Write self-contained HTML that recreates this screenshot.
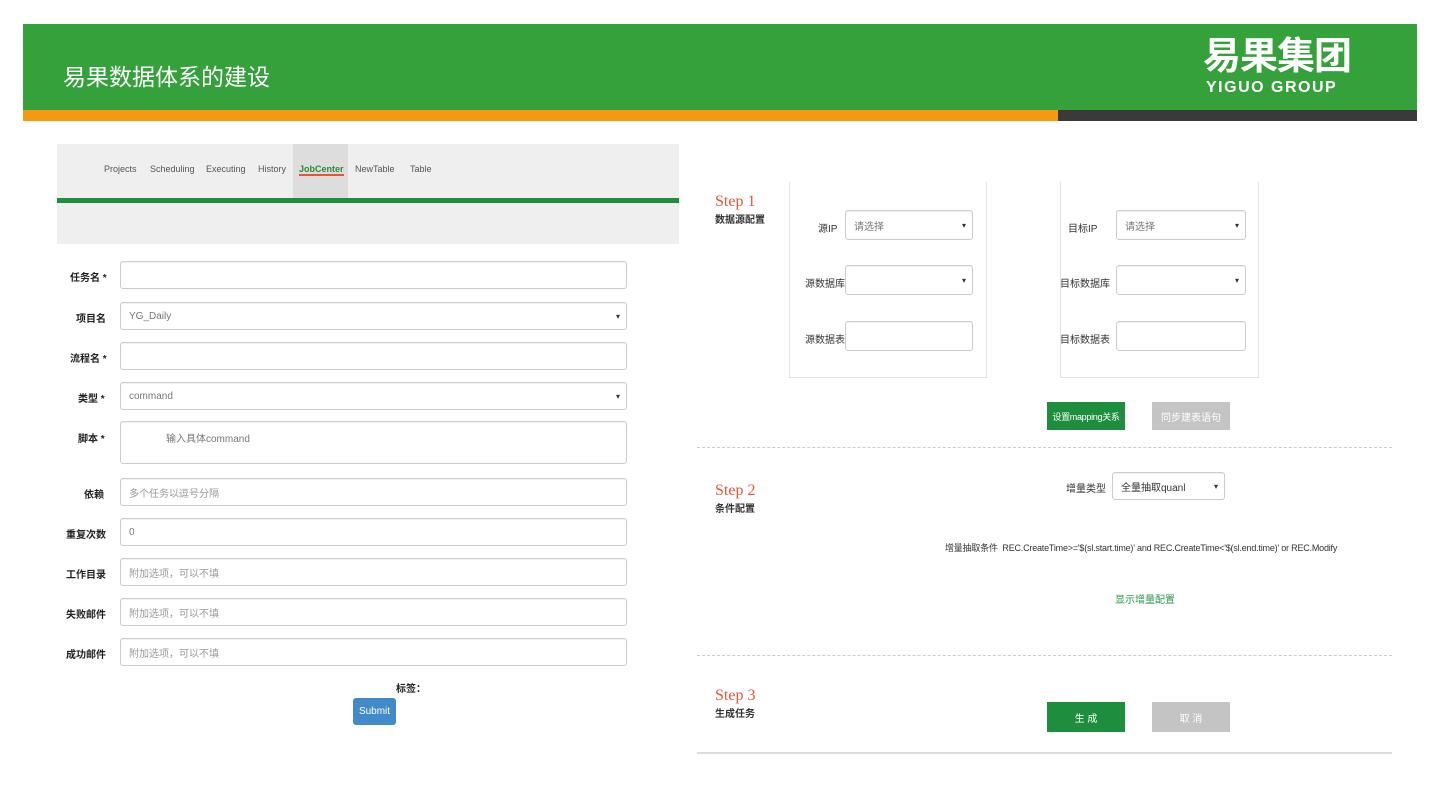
<!DOCTYPE html>
<html><head><meta charset="utf-8"><style>
*{margin:0;padding:0;box-sizing:border-box}
body{width:1440px;height:810px;background:#fff;position:relative;overflow:hidden;font-family:"Liberation Sans","Noto Sans CJK SC",sans-serif;color:#333}
.a{position:absolute}
.inp{position:absolute;border:1px solid #ccc;border-radius:3px;background:#fff;font-size:10px;color:#777;padding:0 8px;display:flex;align-items:center;box-shadow:inset 0 1px 1px rgba(0,0,0,.06)}
.sel::after{content:"▾";position:absolute;right:6px;font-size:8px;color:#333}
.lbl{position:absolute;font-size:10px;color:#222;font-weight:bold}
.rl{position:absolute;font-size:10px;color:#333}
.btn{position:absolute;color:#fff;font-size:10px;display:flex;align-items:center;justify-content:center;white-space:nowrap}
.step{position:absolute;font-size:10px}
.step b{color:#e8533a;font-weight:normal;font-size:16px;font-family:"Liberation Serif",serif}
.nav span{position:absolute;top:164px;font-size:9px;color:#555;white-space:nowrap}
</style></head><body>
<div class="a" style="left:23px;top:24px;width:1394px;height:86px;background:#34a13a"></div>
<div class="a" style="left:23px;top:110px;width:1035px;height:11px;background:#f39a12"></div>
<div class="a" style="left:1058px;top:110px;width:359px;height:11px;background:#3a3a3a"></div>
<div class="a" style="left:63px;top:58px;color:#fff;font-size:23px">易果数据体系的建设</div>
<div class="a" style="left:1203px;top:36px;color:#fff;font-size:38px;font-weight:bold;letter-spacing:-1px;line-height:42px">易果集团</div>
<div class="a" style="left:1206px;top:79px;color:#fff;font-size:16px;font-weight:bold;letter-spacing:1.5px">YIGUO GROUP</div>

<div class="a" style="left:57px;top:144px;width:622px;height:54px;background:#efefef"></div>
<div class="a" style="left:293px;top:144px;width:55px;height:54px;background:#ddd"></div>
<div class="nav">
<span style="left:104px">Projects</span>
<span style="left:150px">Scheduling</span>
<span style="left:206px">Executing</span>
<span style="left:258px">History</span>
<span style="left:299px;color:#2a8a3a;font-weight:bold;border-bottom:2px solid #e8533a">JobCenter</span>
<span style="left:355px">NewTable</span>
<span style="left:410px">Table</span>
</div>
<div class="a" style="left:57px;top:198px;width:622px;height:5px;background:#1e8e3e"></div>
<div class="a" style="left:57px;top:203px;width:622px;height:41px;background:#efefef"></div>

<div class="lbl" style="left:70px;top:269px">任务名 *</div><div class="inp" style="left:120px;top:261px;width:507px;height:28px"></div>
<div class="lbl" style="left:76px;top:310px">项目名</div><div class="inp sel" style="left:120px;top:302px;width:507px;height:28px">YG_Daily</div>
<div class="lbl" style="left:70px;top:350px">流程名 *</div><div class="inp" style="left:120px;top:342px;width:507px;height:28px"></div>
<div class="lbl" style="left:78px;top:390px">类型 *</div><div class="inp sel" style="left:120px;top:382px;width:507px;height:28px">command</div>
<div class="lbl" style="left:78px;top:430px">脚本 *</div><div class="inp" style="left:120px;top:421px;width:507px;height:43px;align-items:flex-start;padding:8px 0 0 45px">输入具体command</div>
<div class="lbl" style="left:84px;top:486px">依赖</div><div class="inp" style="left:120px;top:478px;width:507px;height:28px;color:#999">多个任务以逗号分隔</div>
<div class="lbl" style="left:66px;top:526px">重复次数</div><div class="inp" style="left:120px;top:518px;width:507px;height:28px">0</div>
<div class="lbl" style="left:66px;top:566px">工作目录</div><div class="inp" style="left:120px;top:558px;width:507px;height:28px;color:#999">附加选项，可以不填</div>
<div class="lbl" style="left:66px;top:606px">失败邮件</div><div class="inp" style="left:120px;top:598px;width:507px;height:28px;color:#999">附加选项，可以不填</div>
<div class="lbl" style="left:66px;top:646px">成功邮件</div><div class="inp" style="left:120px;top:638px;width:507px;height:28px;color:#999">附加选项，可以不填</div>
<div class="lbl" style="left:396px;top:680px">标签：</div>
<div class="btn" style="left:353px;top:698px;width:43px;height:27px;background:#428bca;border-radius:3px">Submit</div>

<div class="step" style="left:715px;top:193px"><b>Step 1</b><br><span style="font-weight:bold">数据源配置</span></div>
<div class="a" style="left:789px;top:182px;width:198px;height:196px;border:1px solid #e2e2e2;border-top:none"></div>
<div class="a" style="left:1060px;top:182px;width:199px;height:196px;border:1px solid #e2e2e2;border-top:none"></div>
<div class="rl" style="left:818px;top:220px">源IP</div><div class="inp sel" style="left:845px;top:210px;width:128px;height:30px">请选择</div>
<div class="rl" style="left:805px;top:275px">源数据库</div><div class="inp sel" style="left:845px;top:265px;width:128px;height:30px"></div>
<div class="rl" style="left:805px;top:331px">源数据表</div><div class="inp" style="left:845px;top:321px;width:128px;height:30px"></div>
<div class="rl" style="left:1068px;top:220px">目标IP</div><div class="inp sel" style="left:1116px;top:210px;width:130px;height:30px">请选择</div>
<div class="rl" style="left:1060px;top:275px">目标数据库</div><div class="inp sel" style="left:1116px;top:265px;width:130px;height:30px"></div>
<div class="rl" style="left:1060px;top:331px">目标数据表</div><div class="inp" style="left:1116px;top:321px;width:130px;height:30px"></div>
<div class="btn" style="left:1047px;top:402px;width:78px;height:28px;background:#1e8e3e;font-size:9px;letter-spacing:-0.3px">设置mapping关系</div>
<div class="btn" style="left:1152px;top:402px;width:78px;height:28px;background:#c4c4c4">同步建表语句</div>
<div class="a" style="left:697px;top:447px;width:695px;border-top:1px dashed #ccc"></div>

<div class="step" style="left:715px;top:482px"><b>Step 2</b><br><span style="font-weight:bold">条件配置</span></div>
<div class="rl" style="left:1066px;top:480px">增量类型</div><div class="inp sel" style="left:1112px;top:472px;width:113px;height:28px;color:#333">全量抽取quanl</div>
<div class="rl" style="left:945px;top:541px;white-space:nowrap;font-size:9px;letter-spacing:-0.2px">增量抽取条件 &nbsp;REC.CreateTime&gt;='$(sl.start.time)' and REC.CreateTime&lt;'$(sl.end.time)' or REC.Modify</div>
<div class="rl" style="left:1115px;top:591px;color:#2a9a4a">显示增量配置</div>
<div class="a" style="left:697px;top:655px;width:695px;border-top:1px dashed #ccc"></div>

<div class="step" style="left:715px;top:687px"><b>Step 3</b><br><span style="font-weight:bold">生成任务</span></div>
<div class="btn" style="left:1047px;top:702px;width:78px;height:30px;background:#1e8e3e">生 成</div>
<div class="btn" style="left:1152px;top:702px;width:78px;height:30px;background:#c4c4c4">取 消</div>
<div class="a" style="left:697px;top:752px;width:695px;height:2px;background:#ddd"></div>
</body></html>
